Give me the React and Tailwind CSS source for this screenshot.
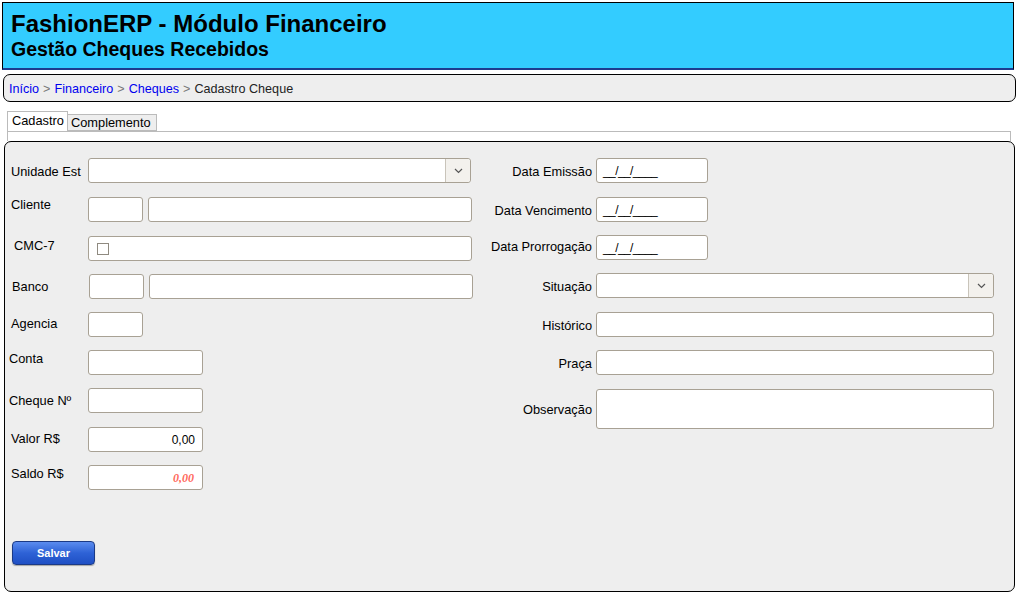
import React from 'react'

const font = { fontFamily: '"Liberation Sans", Arial, sans-serif' }

function Box({ className = '', children }) {
  return (
    <div className={`h-[25px] bg-white border border-[#a8a194] rounded-[3px] ${className}`}>
      {children}
    </div>
  )
}

function Select({ className = '' }) {
  return (
    <div className={`h-[25px] bg-white border border-[#a8a194] rounded-[3px] flex justify-end ${className}`}>
      <div className="w-[25px] h-full border-l border-[#c9c4ba] bg-[#f3f1ed] rounded-r-[3px] flex items-center justify-center">
        <svg width="9" height="6" viewBox="0 0 9 6" fill="none">
          <path d="M1 1l3.5 3.5L8 1" stroke="#555" strokeWidth="1.2" />
        </svg>
      </div>
    </div>
  )
}

function DateBox() {
  return (
    <Box className="w-[112px] flex items-center pl-[6px] pt-[1px] text-[12px] text-black">
      <span className="tracking-[-0.6px]">__/__/____</span>
    </Box>
  )
}

function LeftRow({ label, pad, lx = 'pl-[6px]', h, children }) {
  return (
    <div className={`flex ${h}`}>
      <div className={`w-[83px] shrink-0 text-[12.8px] leading-[14px] whitespace-nowrap ${lx} ${pad}`}>{label}</div>
      <div className="flex gap-[5px]">{children}</div>
    </div>
  )
}

function RightRow({ label, h, pad = 'h-[25px]', children }) {
  return (
    <div className={`flex ${h}`}>
      <div className={`w-[112px] shrink-0 text-[12.8px] leading-[14px] whitespace-nowrap flex items-center justify-end pt-[2px] ${pad}`}>
        {label}
      </div>
      <div className="ml-[4px]">{children}</div>
    </div>
  )
}

export default function App() {
  return (
    <div className="w-[1020px] h-[598px] bg-white text-black relative" style={font}>
      <div className="pt-[2px] pl-[2px] w-[1016px]">
        <div className="h-[68px] bg-[#33ccff] border-l border-t border-r border-black border-b-2 border-b-[#1d3b8f] w-[1012px] px-[8px] pt-[8px]">
          <div className="text-[24px] font-bold leading-[26px]">FashionERP - Módulo Financeiro</div>
          <div className="text-[19.5px] font-bold leading-[22px] mt-[1px]">Gestão Cheques Recebidos</div>
        </div>
      </div>

      <div className="ml-[3px] mt-[4px] w-[1013px] h-[28px] bg-[#eeeeee] border border-black rounded-[7px] flex items-center pl-[5px] text-[12.6px] pt-[3px]">
        <span className="text-[#0000ee]">Início</span>
        <span className="text-[#777] mx-[4px]">&gt;</span>
        <span className="text-[#0000ee]">Financeiro</span>
        <span className="text-[#777] mx-[4px]">&gt;</span>
        <span className="text-[#0000ee]">Cheques</span>
        <span className="text-[#777] mx-[4px]">&gt;</span>
        <span className="text-[#222]">Cadastro Cheque</span>
      </div>

      <div className="ml-[7px] mt-[9px] flex items-end h-[20px]">
        <div className="h-[20px] w-[61px] pl-[4px] border border-b-0 border-[#bbbbbb] bg-white text-[12.8px] leading-[17px] whitespace-nowrap">
          Cadastro
        </div>
        <div className="h-[17px] w-[89px] pl-[3px] border border-[#bbbbbb] border-l-0 bg-[#eeeeee] text-[12.8px] leading-[16px] whitespace-nowrap">
          Complemento
        </div>
      </div>
      <div className="ml-[7px] w-[1004px] h-[10px] border border-b-0 border-[#bbbbbb] bg-white" />

      <div className="ml-[4px] w-[1011px] h-[451px] bg-[#eeeeee] border border-black rounded-[7px] pt-[16px] flex flex-col">
        <div className="flex">
          <div className="w-[475px] shrink-0 flex flex-col">
            <LeftRow label="Unidade Est" pad="pt-[7px]" h="h-[39px]">
              <Select className="w-[383px]" />
            </LeftRow>
            <LeftRow label="Cliente" pad="pt-[1px]" h="h-[39px]">
              <Box className="w-[55px]" />
              <Box className="w-[324px]" />
            </LeftRow>
            <LeftRow label="CMC-7" lx="pl-[9px]" pad="pt-[3px]" h="h-[38px]">
              <Box className="w-[384px] flex items-center pl-[8px]">
                <div className="w-[12px] h-[12px] border border-[#8f8a80] bg-white" />
              </Box>
            </LeftRow>
            <LeftRow label="Banco" lx="pl-[7px]" pad="pt-[6px]" h="h-[38px]">
              <div className="flex gap-[5px] ml-px">
                <Box className="w-[55px]" />
                <Box className="w-[324px]" />
              </div>
            </LeftRow>
            <LeftRow label="Agencia" pad="pt-[5px]" h="h-[38px]">
              <Box className="w-[55px]" />
            </LeftRow>
            <LeftRow label="Conta" lx="pl-[4px]" pad="pt-[2px]" h="h-[38px]">
              <Box className="w-[115px]" />
            </LeftRow>
            <LeftRow label="Cheque Nº" lx="pl-[4px]" pad="pt-[6px]" h="h-[39px]">
              <Box className="w-[115px]" />
            </LeftRow>
            <LeftRow label="Valor R$" pad="pt-[5px]" h="h-[38px]">
              <Box className="w-[115px] flex items-center justify-end pr-[7px] text-[12px]">0,00</Box>
            </LeftRow>
            <LeftRow label="Saldo R$" pad="pt-[2px]" h="h-[25px]">
              <Box className="w-[115px] flex items-center justify-end pr-[8px] text-[12px] italic font-bold text-[#ff6a5c]">
                <span style={{ fontFamily: '"Liberation Serif", "Times New Roman", serif' }}>0,00</span>
              </Box>
            </LeftRow>
          </div>

          <div className="flex flex-col">
            <RightRow label="Data Emissão" h="h-[39px]">
              <DateBox />
            </RightRow>
            <RightRow label="Data Vencimento" h="h-[38px]" pad="h-[26px]">
              <DateBox />
            </RightRow>
            <RightRow label="Data Prorrogação" h="h-[38px]" pad="h-[21px]">
              <DateBox />
            </RightRow>
            <RightRow label="Situação" h="h-[39px]">
              <Select className="w-[398px]" />
            </RightRow>
            <RightRow label="Histórico" h="h-[38px]">
              <Box className="w-[398px]" />
            </RightRow>
            <RightRow label="Praça" h="h-[39px]">
              <Box className="w-[398px]" />
            </RightRow>
            <RightRow label="Observação" h="h-[40px]" pad="h-[39px]">
              <Box className="w-[398px] h-[40px]" />
            </RightRow>
          </div>
        </div>

        <div className="ml-[7px] mt-[50px]">
          <button className="w-[83px] h-[24px] rounded-[4px] border border-[#1b3a86] bg-gradient-to-b from-[#5b8cef] via-[#2e62d6] to-[#1f4fc4] text-white text-[11px] font-bold shadow-[0_1px_1px_rgba(0,0,0,0.3)]">
            Salvar
          </button>
        </div>
      </div>
    </div>
  )
}
